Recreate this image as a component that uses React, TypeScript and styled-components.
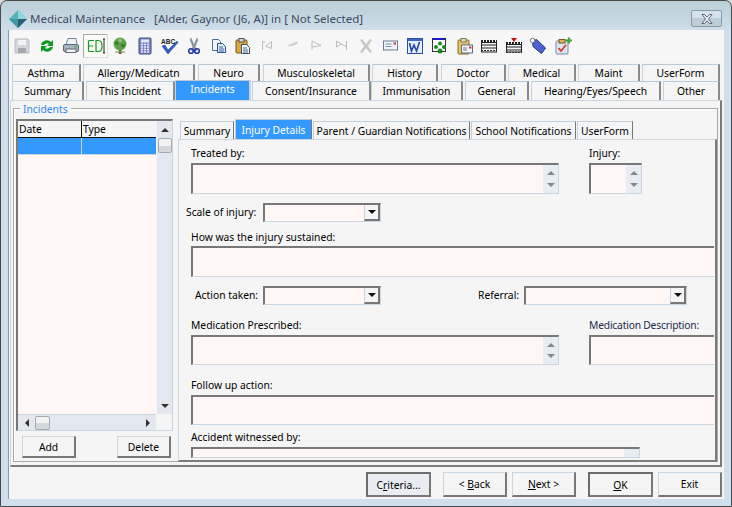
import React from "react";
import styled, { createGlobalStyle } from "styled-components";

const Global = createGlobalStyle`
  html, body { margin: 0; padding: 0; background: #d8d8d8; }
  * { box-sizing: border-box; }
  body { font-family: "Noto Sans", "Liberation Sans", sans-serif; font-size: 10.3px; color: #000; }
`;

const Win = styled.div`
  width: 732px; height: 507px; display: flex; flex-direction: column; overflow: hidden;
  border: 1px solid #4a4a4a; border-radius: 7px 7px 0 0;
  background: linear-gradient(#bcd0d9 0, #c3d5de 14px, #cfdfee 30px);
`;
const TitleBar = styled.div`
  height: 29px; flex: none; display: flex; align-items: center; padding: 6px 9px 0 8px;
`;
const TitleText = styled.div`
  margin-left: 3px; font-size: 11.5px; color: #3c4a5c; white-space: pre; flex: 1;
`;
const CloseBtn = styled.div`
  width: 31px; height: 17px; border: 1px solid #8b9ba6; border-radius: 2px;
  display: flex; align-items: center; justify-content: center;
  background: linear-gradient(#d6e2ea 50%, #bccdd6 50%);
`;
const Client = styled.div`
  margin: 0 7px 7px 7px; flex: 1; min-height: 0; display: flex; flex-direction: column; background: #f5f5f5;
  border-left: 1px solid #8f9aa3;
`;
const Toolbar = styled.div`
  height: 31px; flex: none; display: flex; align-items: center; padding: 0 0 0 .7px; background: #f7f7f7;
`;
const ToolSlot = styled.div<{ $active?: boolean }>`
  width: 24.6px; height: 24px; flex: none; display: flex; align-items: center; justify-content: center;
  ${p => p.$active ? "background:#fbfbf6;border:1px solid #aaa;border-right-color:#ddd;border-bottom-color:#ddd;" : ""}
`;
const TabRows = styled.div`
  flex: none; padding: 3px 0 0 3px; display: flex; flex-direction: column; position: relative;
`;
const TabRow = styled.div<{ $h: number }>`
  display: flex; height: ${p => p.$h}px; align-items: flex-end;
`;
const Tab = styled.div<{ $w: number; $ml?: number; $on?: boolean }>`
  width: ${p => p.$w}px; margin-left: ${p => p.$ml ?? 0}px; flex: none;
  height: ${p => p.$on ? "20px" : "100%"}; display: flex; align-items: center; justify-content: center;
  white-space: nowrap; font-size: 10.3px; padding-bottom: ${p => p.$on ? 3 : 0}px;
  position: relative; z-index: ${p => p.$on ? 2 : 1};
  background: ${p => p.$on ? "#3399ff" : "#f5f5f5"}; color: ${p => p.$on ? "#fff" : "#000"};
  border-top: 1px solid #b9c8d2; border-left: 1px solid #c6d3dc;
  border-right: 2px solid ${p => p.$on ? "#c6d3dc" : "#8a8a8a"};
`;
const Page = styled.div`
  flex: 1; min-height: 0; margin: 0 2px 0 1px; padding: 7px 2px 3px 2px; display: flex;
  border-top: 1px solid #c9d6e0; border-left: 1px solid #c9d6e0; border-right: 2px solid #7b7b7b; border-bottom: 2px solid #7b7b7b;
`;
const Group = styled.div`
  flex: 1; position: relative; display: flex; gap: 5px; padding: 10px 0 0 2px;
  border: 1px solid #a9a9a9; box-shadow: inset 1px 1px 0 #fff;
`;
const Legend = styled.div`
  position: absolute; left: 6px; top: -6px; padding: 0 3px; background: #f5f5f5; color: #2f86ec; font-size: 10.3px; line-height: 13px;
`;
const LeftCol = styled.div`
  width: 157px; flex: none; display: flex; flex-direction: column;
`;
const ListBox = styled.div`
  height: 312px; flex: none; display: grid; grid-template-columns: 1fr 16px; grid-template-rows: 1fr 16px;
  border-top: 2px solid #777; border-left: 2px solid #777; border-right: 1px solid #c9d6e0; border-bottom: 1px solid #c9d6e0;
`;
const ListMain = styled.div` background: #fff6f6; min-height: 0; `;
const ListRow = styled.div<{ $head?: boolean }>`
  display: flex;
  ${p => p.$head
    ? "height:17px;border-bottom:1px solid #111;background:#f5f5f5;"
    : "height:17px;background:#3399ff;border-bottom:1px solid #c9d6e0;"}
`;
const Col = styled.div<{ $w?: number; $head?: boolean }>`
  ${p => p.$w ? `width:${p.$w}px;flex:none;` : "flex:1;"}
  padding-left: 1px; font-size: 10.3px; line-height: 16px;
  ${p => p.$w ? `border-right:1px solid ${p.$head ? "#111" : "#c9d6e0"};` : ""}
`;
const VScroll = styled.div`
  background: #e2e7f0; display: flex; flex-direction: column; align-items: stretch; border-left: 1px solid #f5f5f5;
`;
const HScroll = styled.div`
  background: #e2e7f0; display: flex; align-items: center; border-top: 1px solid #c9d6e0;
`;
const Corner = styled.div` background: #f5f5f5; `;
const ArrowCell = styled.div<{ $w?: number; $h?: number; $grow?: boolean }>`
  width: ${p => p.$w ? p.$w + "px" : "auto"}; height: ${p => p.$h ? p.$h + "px" : "auto"};
  ${p => p.$grow ? "flex:1;" : "flex:none;"} display: flex; align-items: center; justify-content: center;
`;
const Arrow = styled.div<{ $d: "up" | "down" | "left" | "right"; $c?: string }>`
  width: 0; height: 0; border-style: solid;
  ${p => {
    const c = p.$c ?? "#333";
    if (p.$d === "up") return `border-width:0 4px 4px 4px;border-color:transparent transparent ${c} transparent;`;
    if (p.$d === "down") return `border-width:4px 4px 0 4px;border-color:${c} transparent transparent transparent;`;
    if (p.$d === "left") return `border-width:4px 4px 4px 0;border-color:transparent ${c} transparent transparent;`;
    return `border-width:4px 0 4px 4px;border-color:transparent transparent transparent ${c};`;
  }}
`;
const Thumb = styled.div<{ $w: number; $h: number }>`
  width: ${p => p.$w}px; height: ${p => p.$h}px; flex: none; align-self: center; border: 1px solid #a3aab0; border-radius: 2px;
  background: linear-gradient(#f2f2f2 50%, #d5d8db 50%);
`;
const LeftButtons = styled.div`
  display: flex; justify-content: space-between; padding: 5px 2px 0 6px;
`;
const Btn = styled.div<{ $w: number; $h?: number; $def?: boolean; $dither?: boolean }>`
  width: ${p => p.$w}px; height: ${p => p.$h ?? 25}px; flex: none; display: flex; align-items: center; justify-content: center;
  font-size: 10.3px; white-space: pre; background: ${p => p.$dither ? "#e9ecf1" : "#f5f5f5"};
  border-top: ${p => p.$def ? 2 : 1}px solid ${p => p.$def ? "#6c6c6c" : "#c9d6e0"};
  border-left: ${p => p.$def ? 2 : 1}px solid ${p => p.$def ? "#6c6c6c" : "#c9d6e0"};
  border-right: 2px solid #777; border-bottom: 2px solid #777;
`;
const RightCol = styled.div`
  flex: 1; min-width: 0; display: flex; flex-direction: column;
`;
const InnerTabs = styled.div`
  display: flex; height: 20px; flex: none; padding-left: 2px; align-items: flex-end;
`;
const InnerTab = styled.div<{ $w: number; $on?: boolean; $ml?: number }>`
  width: ${p => p.$w}px; margin-left: ${p => p.$ml ?? 0}px; flex: none; height: ${p => p.$on ? 20 : 18}px;
  display: flex; align-items: center; justify-content: center; white-space: nowrap; font-size: 10.3px;
  background: ${p => p.$on ? "#3399ff" : "#f5f5f5"}; color: ${p => p.$on ? "#fff" : "#000"};
  border-top: 1px solid #c3d0da; border-left: 1px solid #c3d0da;
  border-right: 1px solid ${p => p.$on ? "#6f7c87" : "#777"};
`;
const InnerPanel = styled.div`
  height: 323px; width: 539px; flex: none; padding: 7px 0 0 12px; overflow: hidden;
  border-top: 1px solid #c9d6e0; border-left: 1px solid #c9d6e0; border-right: 2px solid #7b7b7b; border-bottom: 2px solid #7b7b7b;
`;
const Row = styled.div<{ $mt?: number; $ml?: number; $gap?: number }>`
  display: flex; align-items: flex-start; margin-top: ${p => p.$mt ?? 0}px; margin-left: ${p => p.$ml ?? 0}px; gap: ${p => p.$gap ?? 0}px;
`;
const Field = styled.div<{ $w: number }>`
  width: ${p => p.$w}px; flex: none; display: flex; flex-direction: column;
`;
const Label = styled.div<{ $dark?: boolean; $tight?: boolean }>`
  font-size: 10.3px; line-height: 13px; height: 13px; white-space: nowrap; margin-bottom: ${p => p.$tight ? 2 : 3}px;
  ${p => p.$dark ? "color:#1c2a4a;letter-spacing:-.2px;" : ""}
`;
const InlineLabel = styled.div<{ $w: number; $ml?: number }>`
  width: ${p => p.$w}px; margin-left: ${p => p.$ml ?? 0}px; flex: none; font-size: 10.3px; white-space: nowrap;
  line-height: 19px; height: 19px;
`;
const Input = styled.div<{ $h: number; $open?: boolean }>`
  height: ${p => p.$h}px; width: 100%; display: flex; justify-content: flex-end; background: #fff6f6;
  border-top: 2px solid #777; border-left: 2px solid #777; border-bottom: 1px solid #c9d6e0;
  border-right: ${p => p.$open ? "none" : "1px solid #c9d6e0"};
`;
const Spin = styled.div`
  width: 15px; flex: none; background: #e8edf3; display: flex; flex-direction: column; align-items: center; justify-content: space-around; padding: 2px 0;
`;
const Combo = styled.div<{ $w: number }>`
  width: ${p => p.$w}px; height: 19px; flex: none; display: flex; justify-content: flex-end; background: #fff6f6;
  border-top: 2px solid #777; border-left: 2px solid #777; border-bottom: 1px solid #c9d6e0; border-right: 1px solid #c9d6e0;
`;
const ComboBtn = styled.div`
  width: 16px; flex: none; background: #f5f5f5; display: flex; align-items: center; justify-content: center;
  border-left: 1px solid #c9d6e0; border-right: 2px solid #777; border-bottom: 2px solid #777;
`;
const Footer = styled.div`
  height: 32px; flex: none; display: flex; justify-content: flex-end; align-items: flex-start; padding: 5px 2px 0 0;
`;
const FootBtn = styled(Btn)<{ $ml?: number }>`
  margin-left: ${p => p.$ml ?? 0}px;
`;
const Key = styled.span` text-decoration: underline; `;
const Ico = styled.svg` display: block; flex: none; `;

const S = ({ children, w = 18, h = 18 }: { children: React.ReactNode; w?: number; h?: number }) => (
  <Ico width={w} height={h} viewBox={`0 0 ${w} ${h}`}>{children}</Ico>
);

const Film = ({ y = 3 }: { y?: number }) => (
  <g>
    <rect x="1.5" y={y + 2.5} width="15" height={12.5 - y} fill="#f4f4f4" stroke="#222" />
    <path d={`M1.500 ${y + 5}h15M1.500 ${y + 8}h15`} stroke="#222" />
    <path d={`M1 ${y + 1}h16`} stroke="#222" strokeWidth="2" strokeDasharray="2 1" />
    <path d={`M1 ${y + 10.500}h16`} stroke="#333" strokeDasharray="2 1" />
  </g>
);

const icons: React.ReactNode[] = [
  <S><path d="M2 2h13l1 1v13H2z" fill="#d3d6d8" stroke="#b9bdc1"/><rect x="5" y="3" width="8" height="5" fill="#f2f3f4"/><rect x="5" y="11" width="8" height="5" fill="#a3a9ae"/></S>,
  <S><path d="M3 8a6 6 0 0 1 10-3l2-2v6H9l2-2a3.500 3.500 0 0 0-5 1z" fill="#0d9b22"/><path d="M15 10a6 6 0 0 1-10 3l-2 2V9h6l-2 2a3.500 3.500 0 0 0 5-1z" fill="#0d9b22"/></S>,
  <S><path d="M6 1.500h8l1 6H4z" fill="#eef2f6" stroke="#7a8898"/><rect x="1.500" y="7.500" width="15" height="7" rx="1.500" fill="#a9b4c2" stroke="#556477"/><rect x="4" y="12" width="10" height="3.500" fill="#f2f2f2" stroke="#667"/><rect x="12" y="9" width="2.500" height="1.500" fill="#33b540"/></S>,
  <Ico width="20" height="16" viewBox="0 0 20 16"><path d="M2.500 2.500H8M2.500 8H7M2.500 13.500H8M2.500 2.500v11" fill="none" stroke="#149a2a" strokeWidth="1.200"/><path d="M10 2.500h2.500c2.500 0 3.500 2 3.500 5.500s-1 5.500-3.500 5.500H10z" fill="none" stroke="#149a2a" strokeWidth="1.200"/><path d="M17 1h2M18 1v14M17 15h2" stroke="#222" strokeWidth="1" fill="none"/></Ico>,
  <S><rect x="7.800" y="10" width="2.600" height="7" fill="#6b5a35"/><path d="M4 15h10" stroke="#6b8a4a"/><circle cx="9" cy="7" r="6.500" fill="#5ea34b"/><circle cx="5.800" cy="6" r="2" fill="#3f7f34"/><circle cx="12" cy="8.500" r="2" fill="#3f7f34"/><circle cx="9" cy="3.500" r="1.800" fill="#8cc676"/></S>,
  <S><rect x="3" y="1" width="12" height="16" rx="1" fill="#7d86c4" stroke="#3c4a7a"/><rect x="5" y="2.500" width="8" height="3" fill="#dfe8f4"/><path d="M5 7.500h2M8 7.500h2M11 7.500h2M5 10h2M8 10h2M11 10h2M5 12.500h2M8 12.500h2M11 12.500h2M5 15h2M8 15h2M11 15h2" stroke="#eef" strokeWidth="1.400"/></S>,
  <Ico width="20" height="18" viewBox="0 0 20 18"><text x="1" y="6.500" fontSize="6.500" fontWeight="700" fontFamily="Liberation Sans" fill="#222">ABC</text><path d="M2 9l3-1 3 5 9-9 1 1.500L8 17z" fill="#2a5fc0" stroke="#1d3f85" strokeWidth=".5"/></Ico>,
  <S><path d="M6 1l3 7 3-7 .8 2L10 10l2 3-2 .8L9 11l-1 2.800L6 13l2-3-2.800-7z" fill="#8d97a3" stroke="#5d6773" strokeWidth=".4"/><circle cx="6" cy="14" r="2.300" fill="none" stroke="#243aa8" strokeWidth="1.600"/><circle cx="12" cy="14" r="2.300" fill="none" stroke="#243aa8" strokeWidth="1.600"/></S>,
  <S><path d="M2.500 2.500h6l2 2v9h-8z" fill="#f2f6fb" stroke="#4f6d96"/><path d="M7.500 6.500h5l3 3v6h-8z" fill="#dfeaf7" stroke="#2f4f86"/><path d="M9 10h4M9 12h5M9 14h5" stroke="#3c6bb0"/></S>,
  <S><rect x="2" y="3" width="11" height="13" rx="1" fill="#d9a93c" stroke="#7a5a1c"/><rect x="5" y="1.500" width="5" height="3.500" fill="#d0d4d8" stroke="#555"/><path d="M7.500 7.500h5l3 3v6h-8z" fill="#f3f6fa" stroke="#3f4f6e"/><path d="M9 11h4M9 13h5M9 15h5" stroke="#4a6a9c"/></S>,
  <S><path d="M3.500 4v9M3.500 5l3 0M6.500 9l6-4.500v7z" fill="none" stroke="#b9bdc1"/></S>,
  <S><path d="M4 9l9-4v1.500L7 9" fill="none" stroke="#c1c4c8"/></S>,
  <S><path d="M4 4v9M4 4l9 4.500-9 1.500" fill="none" stroke="#b9bdc1"/></S>,
  <S><path d="M3.500 4v6l5-3 5 3V4M13.500 4v9M3.500 4l5 3" fill="none" stroke="#b9bdc1"/></S>,
  <S><path d="M3 3l2-1 4 5 4-5 2 1-4 6 4 6-2 1-4-5-4 5-2-1 4-6z" fill="#c6c8ca"/></S>,
  <S><rect x="1.500" y="4" width="14" height="9" fill="#eef3f8" stroke="#6a7c90"/><path d="M3.500 7h6M3.500 9.500h6" stroke="#7f93aa"/><rect x="11.500" y="5.500" width="2.500" height="2" fill="#d23b3b"/></S>,
  <S><rect x="1.500" y="1.500" width="15" height="15" fill="#e6eefb" stroke="#2a4fa8"/><rect x="2" y="2" width="14" height="2" fill="#3b68c8"/><path d="M3.500 6l2 8 2.500-6 2.500 6 3-9" fill="none" stroke="#1f46b0" strokeWidth="1.600"/></S>,
  <S><rect x="1.500" y="1.500" width="13" height="13" fill="#fff" stroke="#333"/><rect x="1.500" y="1" width="13" height="2" fill="#1b1bc4"/><circle cx="9" cy="6.500" r="2" fill="#17891f"/><circle cx="5" cy="10" r="2" fill="#17891f"/><circle cx="13" cy="10" r="2" fill="#17891f"/><circle cx="9" cy="14" r="2.500" fill="#17891f"/></S>,
  <S><rect x="2" y="3" width="11" height="14" rx="1" fill="#e5c46c" stroke="#8a6a20"/><rect x="5" y="1.500" width="5" height="3.500" fill="#eadfae" stroke="#776"/><rect x="5.500" y="8" width="11" height="8" fill="#f3f6fa" stroke="#5e6f86"/><rect x="13" y="9.500" width="2.500" height="2" fill="#d23b3b"/><path d="M7 11h4M7 13h4" stroke="#778"/></S>,
  <S><Film /></S>,
  <S><path d="M6 1h6l-3 4z" fill="#c41212"/><Film y={5} /></S>,
  <S><path d="M4 3.500L8 2l9 8.500-4 5.500L4.500 9z" fill="#4c63c9" stroke="#1c2f86" transform="translate(-.5 .5)"/><circle cx="3.500" cy="3.500" r="2.200" fill="#fff" stroke="#777"/></S>,
  <S><rect x="2" y="4" width="12" height="13" rx="1" fill="#dce6f1" stroke="#7d8ba0"/><rect x="5" y="2.500" width="6" height="3.500" fill="#e0b45a" stroke="#7a5a1c"/><path d="M4.500 11l2.500 3 5-6" fill="none" stroke="#d8342c" strokeWidth="1.700"/><path d="M12 3.500h6M15 .5v6" stroke="#47a93a" strokeWidth="2.200"/></S>,
];

const Up = () => <Arrow $d="up" $c="#888" />;
const Down = () => <Arrow $d="down" $c="#888" />;
const SpinBox = () => <Spin><Up /><Down /></Spin>;
const ComboBox = ({ w }: { w: number }) => (
  <Combo $w={w}><ComboBtn><Arrow $d="down" $c="#111" /></ComboBtn></Combo>
);

const row1: [string, number, number][] = [
  ["Asthma", 69, 0], ["Allergy/Medicatn", 112, 2], ["Neuro", 62, 3], ["Musculoskeletal", 107, 3],
  ["History", 66, 2], ["Doctor", 65, 3], ["Medical", 68, 2], ["Maint", 62, 2], ["UserForm", 78, 2],
];
const row2: [string, number, number][] = [
  ["Summary", 72, 0], ["This Incident", 89, 2], ["Incidents", 76, 0], ["Consent/Insurance", 119, 1],
  ["Immunisation", 92, 0], ["General", 64, 2], ["Hearing/Eyes/Speech", 130, 2], ["Other", 57, 2],
];
const inner: [string, number, number][] = [
  ["Summary", 54, 0], ["Injury Details", 77, 1], ["Parent / Guardian Notifications", 157, 1],
  ["School Notifications", 105, 1], ["UserForm", 56, 1],
];

export default function App() {
  return (
    <>
      <Global />
      <Win>
        <TitleBar>
          <Ico width="18" height="18" viewBox="0 0 18 18">
            <path d="M9 0l9 9-9 9-9-9z" fill="#58b3b8" />
            <path d="M9 0l9 9H9z" fill="#8fd6d8" />
            <path d="M9 9h9l-9 9z" fill="#2c5f72" />
            <path d="M0 9h9v9z" fill="#3f9aa5" />
          </Ico>
          <TitleText>{"Medical Maintenance   [Alder, Gaynor (J6, A)] in [ Not Selected]"}</TitleText>
          <CloseBtn>
            <Ico width="12" height="10" viewBox="0 0 12 10">
              <path d="M1 .5h2.500L6 3.200 8.500.5H11L7.500 5 11 9.500H8.500L6 6.800 3.500 9.500H1L4.500 5z" fill="#eef3f6" stroke="#4c5a64" strokeWidth=".9" />
            </Ico>
          </CloseBtn>
        </TitleBar>
        <Client>
          <Toolbar>
            {icons.map((ic, i) => <ToolSlot key={i} $active={i === 3}>{ic}</ToolSlot>)}
          </Toolbar>
          <TabRows>
            <TabRow $h={17}>
              {row1.map(([t, w, m]) => <Tab key={t} $w={w} $ml={m}>{t}</Tab>)}
            </TabRow>
            <TabRow $h={19}>
              {row2.map(([t, w, m]) => <Tab key={t} $w={w} $ml={m} $on={t === "Incidents"}>{t}</Tab>)}
            </TabRow>
          </TabRows>
          <Page>
            <Group>
              <Legend>Incidents</Legend>
              <LeftCol>
                <ListBox>
                  <ListMain>
                    <ListRow $head><Col $w={64} $head>Date</Col><Col>Type</Col></ListRow>
                    <ListRow><Col $w={64} /><Col /></ListRow>
                  </ListMain>
                  <VScroll>
                    <ArrowCell $h={17}><Arrow $d="up" /></ArrowCell>
                    <Thumb $w={14} $h={15} />
                    <ArrowCell $grow />
                    <ArrowCell $h={16}><Arrow $d="down" /></ArrowCell>
                  </VScroll>
                  <HScroll>
                    <ArrowCell $w={17}><Arrow $d="left" /></ArrowCell>
                    <Thumb $w={15} $h={14} />
                    <ArrowCell $grow />
                    <ArrowCell $w={16}><Arrow $d="right" /></ArrowCell>
                  </HScroll>
                  <Corner />
                </ListBox>
                <LeftButtons>
                  <Btn $w={54} $h={22}>Add</Btn>
                  <Btn $w={54} $h={22}>Delete</Btn>
                </LeftButtons>
              </LeftCol>
              <RightCol>
                <InnerTabs>
                  {inner.map(([t, w, m]) => <InnerTab key={t} $w={w} $ml={m} $on={t === "Injury Details"}>{t}</InnerTab>)}
                </InnerTabs>
                <InnerPanel>
                  <Row $gap={30}>
                    <Field $w={368}><Label>Treated by:</Label><Input $h={31}><SpinBox /></Input></Field>
                    <Field $w={53}><Label>Injury:</Label><Input $h={31}><SpinBox /></Input></Field>
                  </Row>
                  <Row $mt={9} $ml={-5}>
                    <InlineLabel $w={77}>Scale of injury:</InlineLabel>
                    <ComboBox w={118} />
                  </Row>
                  <Row $mt={9}>
                    <Field $w={523}><Label $tight>How was the injury sustained:</Label><Input $h={31} $open /></Field>
                  </Row>
                  <Row $mt={9} $ml={4}>
                    <InlineLabel $w={68}>Action taken:</InlineLabel>
                    <ComboBox w={118} />
                    <InlineLabel $w={46} $ml={97}>Referral:</InlineLabel>
                    <ComboBox w={163} />
                  </Row>
                  <Row $mt={14} $gap={30}>
                    <Field $w={368}><Label>Medication Prescribed:</Label><Input $h={30}><SpinBox /></Input></Field>
                    <Field $w={125}><Label $dark>Medication Description:</Label><Input $h={30} $open /></Field>
                  </Row>
                  <Row $mt={14}>
                    <Field $w={523}><Label>Follow up action:</Label><Input $h={30} $open /></Field>
                  </Row>
                  <Row $mt={6}>
                    <Field $w={449}><Label>Accident witnessed by:</Label><Input $h={11}><Spin /></Input></Field>
                  </Row>
                </InnerPanel>
              </RightCol>
            </Group>
          </Page>
          <Footer>
            <FootBtn $w={65} $def $dither>C<Key>r</Key>iteria...</FootBtn>
            <FootBtn $w={64} $ml={12}>{"< "}<Key>B</Key>ack</FootBtn>
            <FootBtn $w={64} $ml={5}><Key>N</Key>{"ext >"}</FootBtn>
            <FootBtn $w={65} $ml={12} $def><Key>O</Key>K</FootBtn>
            <FootBtn $w={64} $ml={5}>Exit</FootBtn>
          </Footer>
        </Client>
      </Win>
    </>
  );
}
